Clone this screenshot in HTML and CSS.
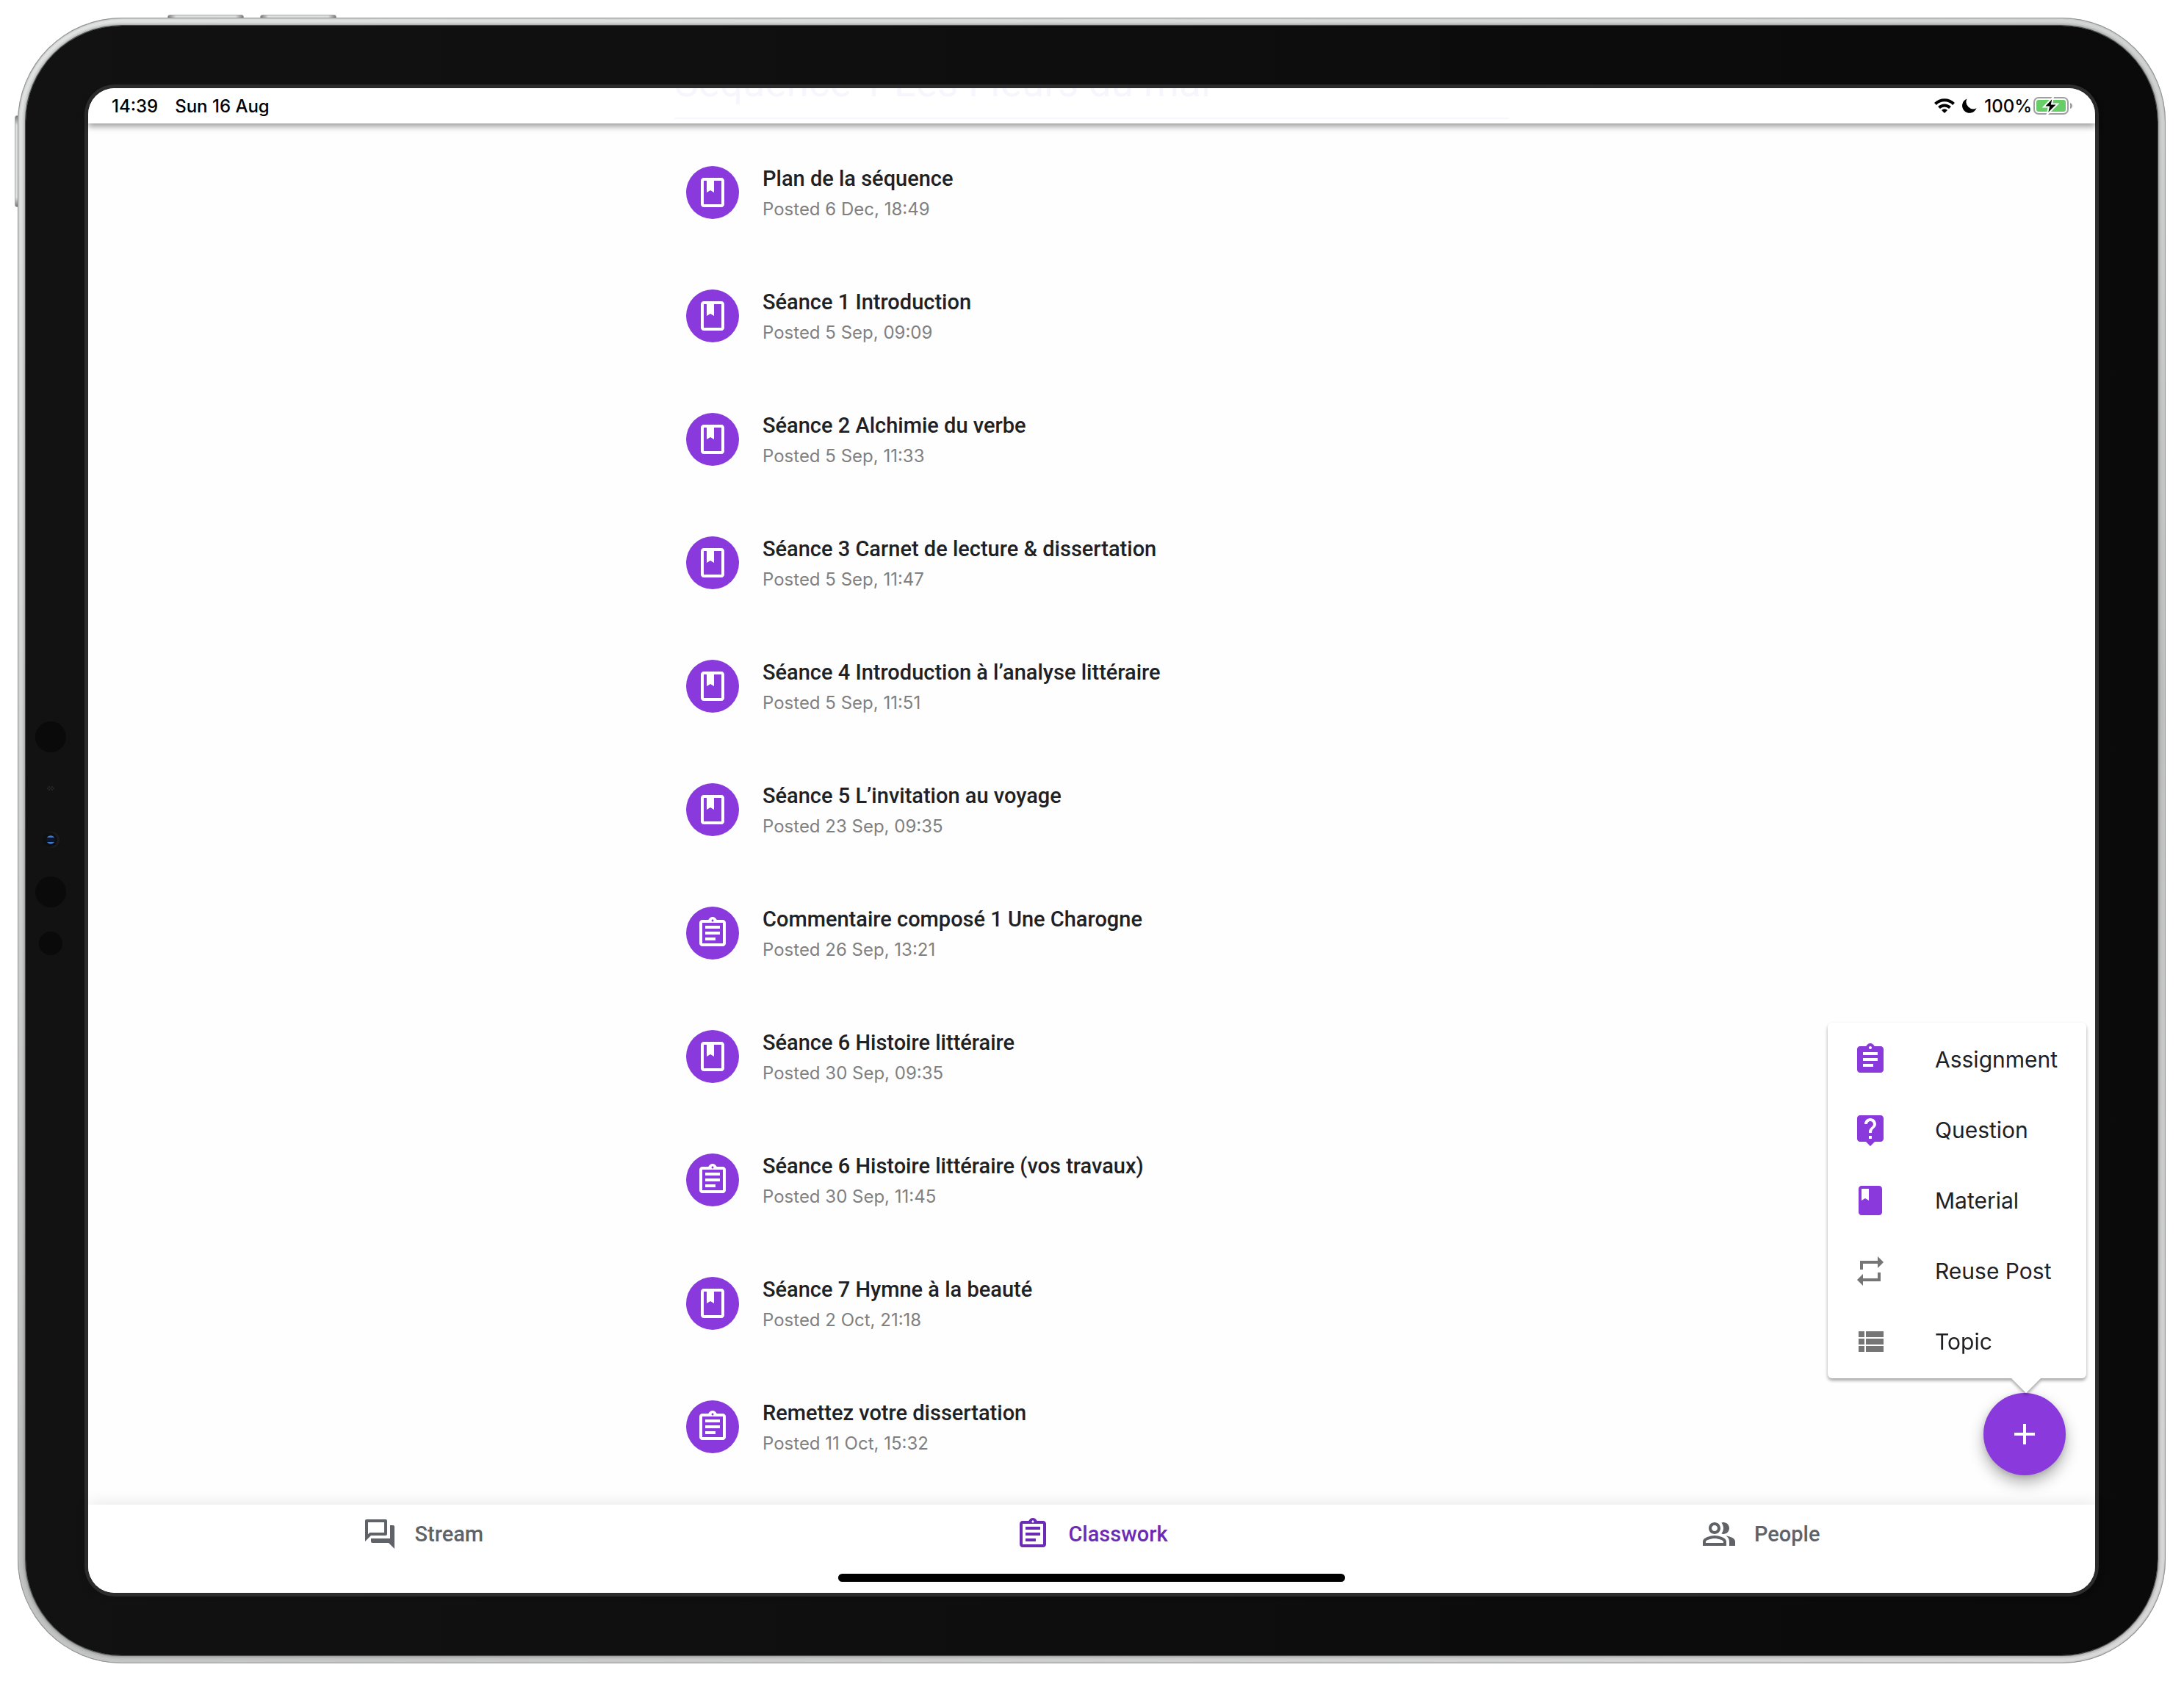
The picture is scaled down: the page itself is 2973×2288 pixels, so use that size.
FILE: index.html
```html
<!DOCTYPE html>
<html lang="en">
<head>
<meta charset="utf-8">
<meta name="viewport" content="width=device-width, initial-scale=1">
<title>Classwork</title>
<link rel="stylesheet" href="styles.css">
</head>
<body>
<svg class="defs" aria-hidden="true">
  <symbol id="i-book" viewBox="0 0 24 24"><path fill-rule="evenodd" d="M18 2H6c-1.1 0-2 .9-2 2v16c0 1.1.9 2 2 2h12c1.1 0 2-.9 2-2V4c0-1.1-.9-2-2-2zM6 4h12v16H6z"/><path d="M8 3h5v9l-2.500-1.500L8 12z"/></symbol>
  <symbol id="i-task" viewBox="0 0 24 24"><path fill-rule="evenodd" d="M7 15h7v2H7zm0-4h10v2H7zm0-4h10v2H7zm12-4h-4.180C14.400 1.840 13.300 1 12 1c-1.300 0-2.400.84-2.820 2H5c-1.100 0-2 .9-2 2v14c0 1.100.9 2 2 2h14c1.100 0 2-.9 2-2V5c0-1.100-.9-2-2-2zm-7-.25c.41 0 .75.34.75.75s-.34.75-.75.75-.75-.34-.75-.75.34-.75.75-.75zM19 19H5V5h14v14z"/></symbol>
  <symbol id="i-task-fill" viewBox="0 0 24 24"><path d="M19 3h-4.180C14.400 1.840 13.300 1 12 1c-1.300 0-2.400.84-2.820 2H5c-1.100 0-2 .9-2 2v14c0 1.100.9 2 2 2h14c1.100 0 2-.9 2-2V5c0-1.100-.9-2-2-2zm-7 0c.55 0 1 .45 1 1s-.45 1-1 1-1-.45-1-1 .45-1 1-1zm2 14H7v-2h7v2zm3-4H7v-2h10v2zm0-4H7V7h10v2z"/></symbol>
  <symbol id="i-help" viewBox="0 0 24 24"><path d="M19 2H5c-1.110 0-2 .9-2 2v14c0 1.100.89 2 2 2h4l3 3 3-3h4c1.100 0 2-.9 2-2V4c0-1.100-.9-2-2-2zm-6 16h-2v-2h2v2zm2.070-7.750l-.9.920C13.450 11.900 13 12.500 13 14h-2v-.5c0-1.100.45-2.100 1.170-2.830l1.240-1.260c.37-.36.59-.86.59-1.410 0-1.100-.9-2-2-2s-2 .9-2 2H8c0-2.210 1.790-4 4-4s4 1.790 4 4c0 .88-.36 1.680-.93 2.250z"/></symbol>
  <symbol id="i-book-fill" viewBox="0 0 24 24"><path d="M18 2H6c-1.100 0-2 .9-2 2v16c0 1.100.9 2 2 2h12c1.100 0 2-.9 2-2V4c0-1.100-.9-2-2-2zM6 4h5v8l-2.500-1.500L6 12V4z"/></symbol>
  <symbol id="i-repeat" viewBox="0 0 24 24"><path d="M7 7h10v3l4-4-4-4v3H5v6h2V7zm10 10H7v-3l-4 4 4 4v-3h12v-6h-2v4z"/></symbol>
  <symbol id="i-list" viewBox="0 0 24 24"><path d="M4 14h4v-4H4v4zm0 5h4v-4H4v4zM4 9h4V5H4v4zm5 5h12v-4H9v4zm0 5h12v-4H9v4zM9 5v4h12V5H9z"/></symbol>
  <symbol id="i-forum" viewBox="0 0 24 24"><path d="M15 4v7H5.170L4 12.170V4h11m1-2H3c-.55 0-1 .45-1 1v14l4-4h10c.55 0 1-.45 1-1V3c0-.55-.45-1-1-1zm5 4h-2v9H6v2c0 .55.45 1 1 1h11l4 4V7c0-.55-.45-1-1-1z"/></symbol>
  <symbol id="i-people" viewBox="0 0 24 24"><path fill-rule="evenodd" d="M9 12c2.210 0 4-1.790 4-4s-1.790-4-4-4-4 1.790-4 4 1.790 4 4 4zm0-6c1.100 0 2 .9 2 2s-.9 2-2 2-2-.9-2-2 .9-2 2-2zm0 7c-2.670 0-8 1.340-8 4v3h16v-3c0-2.660-5.330-4-8-4zm6 5H3v-.99C3.200 16.290 6.300 15 9 15s5.800 1.290 6 2v1z"/><path d="M15 12c2.210 0 4-1.790 4-4s-1.790-4-4-4c-.47 0-.91.1-1.330.24C14.500 5.270 15 6.580 15 8s-.5 2.730-1.330 3.760c.42.14.86.24 1.330.24zM16.670 13.130C18.040 14.060 19 15.320 19 17v3h4v-3c0-2.180-3.570-3.470-6.330-3.870z"/></symbol>
</svg>

<div class="device">
  <span class="key key-vol-a"></span>
  <span class="key key-vol-b"></span>
  <span class="key key-side"></span>
  <div class="bezel">
    <svg class="sensors" viewBox="0 0 44 328" aria-hidden="true">
      <circle cx="22" cy="23" r="21" fill="#0a0a0a"/>
      <g fill="#2c2c2c"><circle cx="20" cy="91" r="1"/><circle cx="24" cy="91" r="1"/><circle cx="18" cy="93" r="1"/><circle cx="22" cy="93" r="1"/><circle cx="26" cy="93" r="1"/><circle cx="20" cy="95" r="1"/><circle cx="24" cy="95" r="1"/></g>
      <circle cx="23" cy="163" r="11" fill="#1c1c1d"/>
      <circle cx="21" cy="163" r="10" fill="#0e0f11"/>
      <circle cx="22" cy="163" r="6" fill="#0b1530"/>
      <path d="M17 160a6 6 0 0 1 10 0zM17 166a6 6 0 0 0 10 0z" fill="#4079c4"/>
      <circle cx="22" cy="234" r="21" fill="#0a0a0a"/>
      <circle cx="22" cy="304" r="16" fill="#0a0a0a"/>
    </svg>
    <div class="screen">
      <header class="status">
        <div class="topic"><h1>Séquence 1 Les Fleurs du mal</h1></div>
        <div class="status-group clock"><span>14:39</span><span>Sun 16 Aug</span></div>
        <div class="status-group">
          <svg width="28" height="20" viewBox="0 0 28 20" aria-hidden="true"><g fill="none" stroke="#000" stroke-width="4"><path d="M1.500 7.500a17.500 17.500 0 0 1 25 0"/><path d="M6.500 12.500a10.600 10.600 0 0 1 15 0"/></g><path d="M14 20l-4-4a5.600 5.600 0 0 1 8 0z"/></svg>
          <svg class="moon" width="20" height="20" viewBox="0 0 20 20" aria-hidden="true"><path d="M6.500.5A10 10 0 1 0 19.500 13.200 9.600 9.600 0 0 1 6.500.5z"/></svg>
          <span>100%</span>
          <svg class="battery" width="54" height="26" viewBox="0 0 54 26" aria-hidden="true"><rect x="1" y="2" width="46" height="22" rx="6" fill="#fff" stroke="#a0a0a0" stroke-width="2"/><rect x="4" y="5" width="40" height="16" rx="3" fill="#67ce67"/><path d="M50 9q3 1 3 4t-3 4z" fill="#a0a0a0"/><path d="M27 1L14 14.500h7L18.500 25 33 10.500h-8z" fill="#000" stroke="#fff" stroke-width="2"/></svg>
        </div>
      </header>

      <main class="content">
        <ul class="posts">
          <li class="post"><span class="badge"><svg><use href="#i-book"/></svg></span><div class="post-text"><h2>Plan de la séquence</h2><p>Posted 6 Dec, 18:49</p></div></li>
          <li class="post"><span class="badge"><svg><use href="#i-book"/></svg></span><div class="post-text"><h2>Séance 1 Introduction</h2><p>Posted 5 Sep, 09:09</p></div></li>
          <li class="post"><span class="badge"><svg><use href="#i-book"/></svg></span><div class="post-text"><h2>Séance 2 Alchimie du verbe</h2><p>Posted 5 Sep, 11:33</p></div></li>
          <li class="post"><span class="badge"><svg><use href="#i-book"/></svg></span><div class="post-text"><h2>Séance 3 Carnet de lecture &amp; dissertation</h2><p>Posted 5 Sep, 11:47</p></div></li>
          <li class="post"><span class="badge"><svg><use href="#i-book"/></svg></span><div class="post-text"><h2>Séance 4 Introduction à l’analyse littéraire</h2><p>Posted 5 Sep, 11:51</p></div></li>
          <li class="post"><span class="badge"><svg><use href="#i-book"/></svg></span><div class="post-text"><h2>Séance 5 L’invitation au voyage</h2><p>Posted 23 Sep, 09:35</p></div></li>
          <li class="post"><span class="badge"><svg><use href="#i-task"/></svg></span><div class="post-text"><h2>Commentaire composé 1 Une Charogne</h2><p>Posted 26 Sep, 13:21</p></div></li>
          <li class="post"><span class="badge"><svg><use href="#i-book"/></svg></span><div class="post-text"><h2>Séance 6 Histoire littéraire</h2><p>Posted 30 Sep, 09:35</p></div></li>
          <li class="post"><span class="badge"><svg><use href="#i-task"/></svg></span><div class="post-text"><h2>Séance 6 Histoire littéraire (vos travaux)</h2><p>Posted 30 Sep, 11:45</p></div></li>
          <li class="post"><span class="badge"><svg><use href="#i-book"/></svg></span><div class="post-text"><h2>Séance 7 Hymne à la beauté</h2><p>Posted 2 Oct, 21:18</p></div></li>
          <li class="post"><span class="badge"><svg><use href="#i-task"/></svg></span><div class="post-text"><h2>Remettez votre dissertation</h2><p>Posted 11 Oct, 15:32</p></div></li>
        </ul>

        <button class="fab" type="button" aria-label="Create"><svg viewBox="0 0 24 24"><path d="M19 13h-6v6h-2v-6H5v-2h6V5h2v6h6z"/></svg></button>
        <div class="menu">
          <button type="button"><svg><use href="#i-task-fill"/></svg>Assignment</button>
          <button type="button"><svg><use href="#i-help"/></svg>Question</button>
          <button type="button"><svg><use href="#i-book-fill"/></svg>Material</button>
          <button type="button" class="plain"><svg><use href="#i-repeat"/></svg>Reuse Post</button>
          <button type="button" class="plain"><svg><use href="#i-list"/></svg>Topic</button>
        </div>
      </main>

      <nav class="tabs">
        <a href="#stream"><svg><use href="#i-forum"/></svg>Stream</a>
        <a href="#classwork" class="active" aria-current="page"><svg><use href="#i-task"/></svg>Classwork</a>
        <a href="#people"><svg><use href="#i-people"/></svg>People</a>
        <span class="home-bar"></span>
      </nav>
    </div>
  </div>
</div>
</body>
</html>
```
FILE: styles.css
```css
* { box-sizing: border-box; }

body {
  margin: 0;
  padding: 24px 25px 24px 24px;
  background: #fff;
  font-family: Inter, "Liberation Sans", sans-serif;
  color: #202124;
}

h1, h2, p, ul { margin: 0; padding: 0; }
button { border: 0; background: none; font: inherit; color: inherit; }
.defs { display: none; }

/* Tablet body */
.device {
  position: relative;
  padding: 11px;
  border-radius: 142px;
  background: linear-gradient(160deg, #e2e5e4 0%, #d4d7d6 30%, #bcbebd 60%, #dcdcdc 100%);
  box-shadow: inset 0 0 0 1px #929292, inset 0 0 2px 2px #c4c6c5;
}

.bezel {
  position: relative;
  padding: 85px;
  border-radius: 131px;
  background: linear-gradient(90deg, #121212, #0a0a0a);
  box-shadow: 0 0 0 1px #4a4a4a, 0 0 5px 1px rgba(0, 0, 0, .45);
}

.sensors {
  position: absolute;
  left: 12px;
  top: calc(50% - 164px);
  width: 44px;
  height: 328px;
}

.key {
  position: absolute;
  z-index: -1;
  border: 1px solid #a5a8a7;
  border-radius: 3px;
  background: linear-gradient(90deg, #777, #dfe1e0 10%, #dfe1e0 90%, #777);
}
.key-vol-a { left: 204px; top: -4px; width: 104px; height: 8px; }
.key-vol-b { left: 330px; top: -4px; width: 104px; height: 8px; }
.key-side {
  left: -4px;
  top: 133px;
  width: 8px;
  height: 125px;
  background: linear-gradient(#777, #dfe1e0 10%, #dfe1e0 90%, #777);
}

.screen {
  display: flex;
  flex-direction: column;
  border-radius: 36px;
  background: #fefefe;
  box-shadow: 0 0 0 5px #2d2d2d;
}

/* Status bar */
.status {
  position: relative;
  z-index: 1;
  display: flex;
  align-items: center;
  justify-content: space-between;
  height: 48px;
  padding: 0 30px 0 32px;
  border-radius: 36px 36px 0 0;
  background: #fff;
  box-shadow: 0 4px 8px rgba(0, 0, 0, .4);
  font-size: 24px;
  font-weight: 500;
  color: #000;
}
.status-group { position: relative; display: flex; align-items: center; gap: 10px; }
.clock { gap: 23px; }
.battery { margin-left: -8px; }

.topic {
  position: absolute;
  inset: 0;
  display: flex;
  justify-content: center;
  align-items: flex-end;
  overflow: hidden;
  padding-bottom: 6px;
}
.topic h1 {
  width: 1136px;
  padding-bottom: 20px;
  border-bottom: 2px solid #f6f6fc;
  font-family: Roboto, sans-serif;
  font-size: 55px;
  line-height: 56px;
  font-weight: 400;
  color: #f8f6fd;
}

/* Post list */
.content { position: relative; padding: 10px 0 22px; }
.posts { width: 1136px; margin: 0 auto; list-style: none; }
.post {
  display: flex;
  align-items: center;
  gap: 32px;
  height: 168px;
  padding: 0 16px;
}
.post-text { padding-top: 6px; }
.post h2 {
  font-family: Roboto, sans-serif;
  font-size: 29px;
  line-height: 40px;
  font-weight: 500;
  color: #202124;
}
.post p { font-size: 24px; line-height: 44px; color: #808080; }

.badge {
  display: flex;
  align-items: center;
  justify-content: center;
  width: 72px;
  height: 72px;
  border-radius: 50%;
  background: #8939dc;
}
.badge svg, .fab svg { width: 48px; height: 48px; fill: #fff; }

/* Create button and its menu */
.fab {
  position: absolute;
  right: 40px;
  bottom: 40px;
  display: flex;
  align-items: center;
  justify-content: center;
  width: 112px;
  height: 112px;
  padding: 0;
  border-radius: 50%;
  background: #8939dc;
  box-shadow: 0 10px 20px rgba(0, 0, 0, .3), 0 2px 6px rgba(0, 0, 0, .12);
}

.menu {
  position: absolute;
  right: 12px;
  bottom: 172px;
  width: 352px;
  padding: 2px 0;
  border-radius: 6px;
  background: #fff;
  filter: drop-shadow(0 3px 2px rgba(0, 0, 0, .35));
}
.menu::after {
  content: "";
  position: absolute;
  right: 62px;
  top: 100%;
  border: 20px solid transparent;
  border-top-color: #fff;
  border-bottom: 0;
}
.menu button {
  display: flex;
  align-items: center;
  gap: 64px;
  width: 100%;
  height: 96px;
  padding: 0 34px;
  font-size: 30px;
  color: #202124;
}
.menu svg { width: 48px; height: 48px; fill: #8939dc; }
.menu .plain svg { fill: #757575; }

/* Bottom tabs */
.tabs {
  position: relative;
  display: grid;
  grid-template-columns: repeat(3, 1fr);
  height: 120px;
  border-radius: 0 0 36px 36px;
  background: #fff;
  box-shadow: 0 -4px 20px rgba(0, 0, 0, .08);
}
.tabs a {
  display: flex;
  align-items: center;
  justify-content: center;
  gap: 24px;
  height: 80px;
  font-family: Roboto, sans-serif;
  font-size: 29px;
  font-weight: 500;
  color: #5f6368;
  text-decoration: none;
}
.tabs svg { width: 48px; height: 48px; fill: currentColor; }
.tabs .active { color: #6c2bb4; }
.home-bar {
  position: absolute;
  left: 50%;
  bottom: 15px;
  width: 690px;
  height: 11px;
  margin-left: -345px;
  border-radius: 6px;
  background: #000;
}
```
